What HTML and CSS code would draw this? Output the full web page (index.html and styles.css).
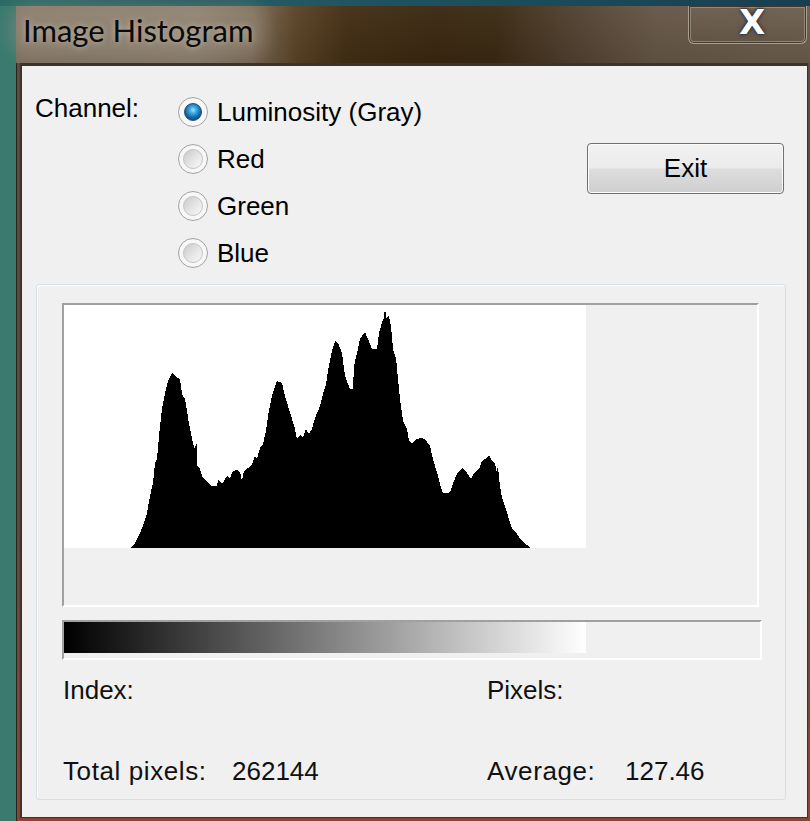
FILE: index.html
```html
<!DOCTYPE html>
<html lang="en">
<head>
<meta charset="utf-8">
<title>Image Histogram</title>
<link rel="stylesheet" href="styles.css">
</head>
<body>
<div class="desktop">
  <div class="window">
    <div class="titlebar">
      <span class="title">Image Histogram</span>
      <button class="close" type="button" aria-label="Close">X</button>
    </div>
    <div class="frame">
      <div class="client">
        <div class="top">
          <div class="channel">Channel:</div>
          <div class="radios">
            <label class="radio-row"><span class="radio checked"></span><span>Luminosity (Gray)</span></label>
            <label class="radio-row"><span class="radio"></span><span>Red</span></label>
            <label class="radio-row"><span class="radio"></span><span>Green</span></label>
            <label class="radio-row"><span class="radio"></span><span>Blue</span></label>
          </div>
          <button class="exit" type="button">Exit</button>
        </div>
        <div class="group">
          <div class="panel hist-panel">
            <div class="plot">
              <svg width="522" height="243" viewBox="64 305 522 243" shape-rendering="crispEdges">
                <polygon fill="#000" points="130,548 135,543 140,533 143,526 147,513 150,496 153,483 155,463 157,459 159,436 162,409 165,393 168,381 172,373 175,376 180,379 182,394 185,399 187,411 189,424 193,443 195,449 196,444 197,444 197,466 200,469 203,478 208,483 211,486 217,486 218,480 222,484 227,476 230,478 233,471 237,470 240,472 242,481 244,471 248,468 252,464 255,456 257,459 260,448 263,444 266,431 268,416 272,396 275,386 277,381 282,383 285,396 288,406 292,419 295,429 297,439 300,435 303,438 306,429 309,434 312,429 315,418 320,406 323,394 326,384 328,371 332,351 335,341 338,343 342,353 345,376 348,384 350,389 353,389 354,366 357,353 360,339 365,332 368,339 372,349 377,349 379,333 383,319 384,319 385,305 386,318 389,316 391,326 393,349 396,358 398,379 400,399 403,421 407,429 409,441 412,443 415,440 420,438 425,439 430,446 433,459 435,466 438,476 441,488 443,493 448,493 451,490 453,483 457,474 462,468 467,473 471,479 474,473 479,469 482,461 485,459 489,455 492,461 495,464 497,473 498,464 499,479 502,498 505,506 508,516 512,528 517,534 522,541 527,545 531,548"/>
              </svg>
            </div>
          </div>
          <div class="panel grad-panel">
            <div class="grad"></div>
          </div>
          <div class="stats">
            <div class="stat">Index:</div>
            <div class="stat">Pixels:</div>
            <div class="stat"><span class="lbl lbl-total">Total pixels:</span><span>262144</span></div>
            <div class="stat"><span class="lbl lbl-avg">Average:</span><span>127.46</span></div>
          </div>
        </div>
      </div>
    </div>
  </div>
</div>
</body>
</html>
```

FILE: styles.css
```css
html, body {
  margin: 0;
  padding: 0;
}

body {
  width: 810px;
  height: 821px;
  overflow: hidden;
  background:
    linear-gradient(to right, #2d6b68, #1e5160 50%, #173f52) top left / 100% 6px no-repeat,
    #3b7a6f;
  font-family: "Liberation Sans", Arial, sans-serif;
  color: #000;
}

.desktop {
  padding: 6px 0 0 16px;
}

.window {
  position: relative;
  width: 794px;
  height: 815px;
  display: flex;
  flex-direction: column;
}

/* Aero-style caption */
.titlebar {
  flex: none;
  height: 57px;
  box-sizing: border-box;
  padding: 6px 0 0 1px;
  background:
    linear-gradient(to bottom, rgba(255, 255, 255, 0.04), rgba(0, 0, 0, 0.08)),
    linear-gradient(to right, #857766 0, #8c7f6e 180px, #7d6c58 235px, #5a4326 280px, #432e14 330px, #3a2710 420px, #3b2a13 480px, #524130 560px, #655646 640px, #6b5d4d 794px);
}

.title {
  display: inline-block;
  font-family: Lato, "Open Sans", sans-serif;
  font-size: 31px;
  line-height: 37px;
  color: #0a0a0a;
  padding: 0 6px;
  border-radius: 12px;
  background: rgba(160, 148, 132, 0.35);
  box-shadow: 0 0 14px 8px rgba(160, 148, 132, 0.35);
  text-shadow: 0 0 6px rgba(215, 205, 190, 0.8);
}

.close {
  position: absolute;
  top: 0;
  right: 3px;
  width: 119px;
  height: 38px;
  margin: 0;
  padding: 0 0 0 9px;
  border: 1px solid #aaa192;
  border-top: none;
  border-radius: 0 0 6px 6px;
  box-shadow: inset 0 0 0 1px #43392d, inset 0 0 0 2px rgba(160, 152, 136, 0.7);
  background: linear-gradient(to bottom, rgba(120, 106, 90, 0.35), rgba(90, 78, 64, 0.25));
  font-family: "DejaVu Sans", sans-serif;
  font-weight: bold;
  font-size: 34px;
  line-height: 32px;
  color: #fff;
  text-shadow: 0 0 2px #1c1c30, 0 0 4px #2a2a40;
  display: flex;
  align-items: flex-start;
  justify-content: center;
}

.frame {
  flex: 1;
  display: flex;
  padding: 0 2px 3px 3px;
  border-left: 1px solid #2b241c;
  background: linear-gradient(to bottom, #5b4c3c, #5d4a3a 60%, #8a4434);
}

.client {
  flex: 1;
  display: flex;
  flex-direction: column;
  border-style: solid;
  border-color: #3d3329;
  border-width: 3px 1px 1px 2px;
  background: #f0f0f0;
  font-size: 26px;
}

/* channel chooser + exit */
.top {
  display: flex;
  padding: 27px 23px 0 13px;
}

.channel {
  width: 143px;
  line-height: 30px;
}

.radios {
  display: flex;
  flex-direction: column;
  gap: 17px;
  margin-top: 4px;
}

.radio-row {
  display: flex;
  align-items: center;
  gap: 9px;
  height: 30px;
  line-height: 30px;
}

.radio {
  width: 30px;
  height: 30px;
  box-sizing: border-box;
  border-radius: 50%;
  border: 1px solid #a2a2a2;
  background: #f7f7f7;
  display: flex;
  align-items: center;
  justify-content: center;
}

.radio::after {
  content: "";
  width: 20px;
  height: 20px;
  box-sizing: border-box;
  border-radius: 50%;
  border: 1px solid #c4c4c4;
  background: linear-gradient(135deg, #c9c9c9, #e6e6e6 55%, #fafafa);
}

.radio.checked::after {
  width: 18px;
  height: 18px;
  border-color: #1b4c78;
  background: radial-gradient(circle at 50% 38%, #9ee6ff 0, #3aa6e0 28%, #13609e 62%, #0b3b68 100%);
}

.exit {
  margin: 50px 0 0 auto;
  width: 197px;
  height: 51px;
  box-sizing: border-box;
  border: 1px solid #707070;
  border-radius: 4px;
  box-shadow: inset 0 0 0 1px #fcfcfc;
  background: linear-gradient(to bottom, #f2f2f2 0, #ebebeb 48%, #dddddd 52%, #cfcfcf 100%);
  font-family: "Liberation Sans", Arial, sans-serif;
  font-size: 26px;
  color: #000;
  padding: 0;
}

/* grouped histogram area */
.group {
  flex: 1;
  margin: 16px 21px 17px 14px;
  border: 1px solid #d5dfe5;
  border-radius: 3px;
  box-shadow: inset 1px 1px 0 #fff;
  padding: 18px 0 0 25px;
}

.panel {
  box-sizing: border-box;
  border: 2px solid;
  border-color: #a0a0a0 #fff #fff #a0a0a0;
  background: #f0f0f0;
}

.hist-panel {
  width: 697px;
  height: 304px;
}

.plot {
  width: 522px;
  height: 243px;
  background: #fff;
}

.plot svg {
  display: block;
}

.grad-panel {
  margin-top: 13px;
  width: 700px;
  height: 40px;
}

.grad {
  width: 522px;
  height: 31px;
  background: linear-gradient(to right, #000, #fff);
}

.stats {
  margin: 15px 0 0 1px;
  display: grid;
  grid-template-columns: 424px auto;
  row-gap: 51px;
  line-height: 30px;
  color: #111;
}

.stat {
  display: flex;
}

.lbl {
  letter-spacing: 0.6px;
}

.lbl-total {
  width: 169px;
}

.lbl-avg {
  width: 138px;
}
```
